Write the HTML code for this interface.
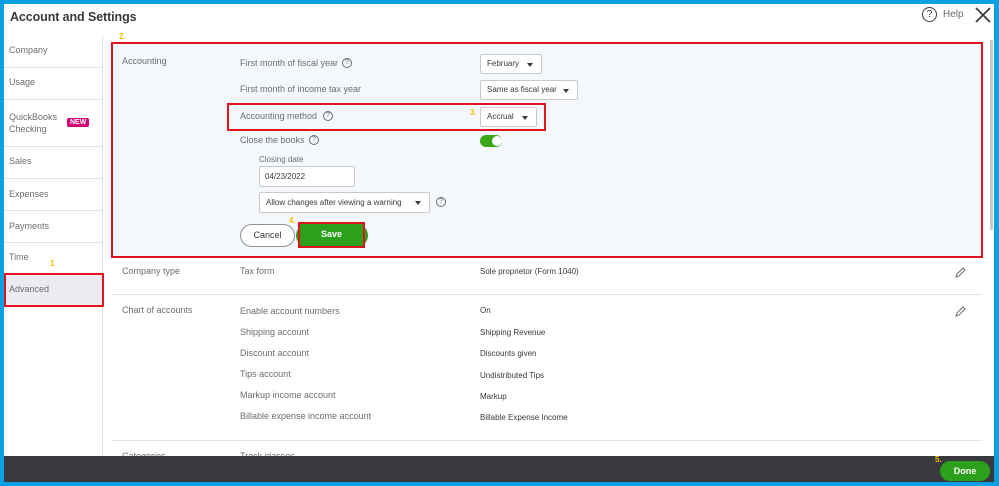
<!DOCTYPE html>
<html><head><meta charset="utf-8"><style>
*{margin:0;padding:0;box-sizing:border-box}
body{width:999px;height:486px;overflow:hidden;background:#0aa0e6;font-family:"Liberation Sans",sans-serif;position:relative}
.a{position:absolute;white-space:nowrap}
.win{position:absolute;left:4px;top:4px;width:990px;height:478px;background:#fff;overflow:hidden}
.t{font-size:9px;color:#6b6c72}
.v{font-size:8px;color:#393a3d}
.sl{position:absolute;left:4px;width:98px;height:1px;background:#e4e4e7}
.hl{position:absolute;left:111px;width:871px;height:1px;background:#e4e4e7}
.sel{position:absolute;background:#fff;border:1px solid #c9c9cc;border-radius:2px;font-size:8px;color:#393a3d;padding:0 0 0 6px;line-height:18px}
.sel:after{content:"";position:absolute;right:8px;top:8px;border-left:3px solid transparent;border-right:3px solid transparent;border-top:4px solid #393a3d}
.q{position:absolute;width:10px;height:10px;border:1px solid #6b6c72;border-radius:50%;font-size:7px;line-height:8px;text-align:center;color:#6b6c72}
.y{position:absolute;font-size:8px;color:#f5c000;font-weight:bold}
</style></head><body>
<div class="win"></div>
<div class="a" style="left:10px;top:10px;font-size:12.5px;font-weight:bold;color:#393a3d;letter-spacing:-0.1px">Account and Settings</div>
<div class="q" style="left:922px;top:7px;width:15px;height:15px;font-size:10px;line-height:13px;border-color:#393a3d;color:#393a3d">?</div>
<div class="a" style="left:943px;top:9px;font-size:10px;color:#6b6c72">Help</div>
<svg class="a" style="left:975px;top:7px" width="16" height="16"><path d="M1 1L15 15M15 1L1 15" stroke="#393a3d" stroke-width="1.8"/></svg>
<div class="a" style="left:990px;top:40px;width:3px;height:190px;background:#c9c9cc"></div>
<!-- sidebar -->
<div class="a" style="left:102px;top:36px;width:1px;height:420px;background:#e4e4e7"></div>
<div class="a t" style="left:9px;top:45px">Company</div><div class="sl" style="top:67px"></div>
<div class="a t" style="left:9px;top:77px">Usage</div><div class="sl" style="top:99px"></div>
<div class="a t" style="left:9px;top:111px;line-height:12px">QuickBooks<br>Checking</div>
<div class="a" style="left:67px;top:118px;background:#d4006f;color:#fff;font-size:7px;font-weight:bold;padding:1px 3px;border-radius:2px">NEW</div>
<div class="sl" style="top:146px"></div>
<div class="a t" style="left:9px;top:156px">Sales</div><div class="sl" style="top:178px"></div>
<div class="a t" style="left:9px;top:189px">Expenses</div><div class="sl" style="top:210px"></div>
<div class="a t" style="left:9px;top:221px">Payments</div><div class="sl" style="top:242px"></div>
<div class="a t" style="left:9px;top:252px">Time</div>
<div class="y" style="left:50px;top:259px">1</div>
<div class="a" style="left:4px;top:273px;width:100px;height:34px;background:#ececf0;border:2px solid #e0141e"></div>
<div class="a t" style="left:9px;top:284px">Advanced</div>
<!-- accounting box -->
<div class="y" style="left:119px;top:32px">2.</div>
<div class="a" style="left:111px;top:42px;width:872px;height:216px;background:#f4f8fd;border:2px solid #e0141e"></div>
<div class="a t" style="left:122px;top:56px">Accounting</div>
<div class="a t" style="left:240px;top:58px">First month of fiscal year</div><div class="q" style="left:342px;top:58px">?</div>
<div class="sel" style="left:480px;top:54px;width:62px;height:20px">February</div>
<div class="a t" style="left:240px;top:84px">First month of income tax year</div>
<div class="sel" style="left:480px;top:80px;width:98px;height:20px">Same as fiscal year</div>
<div class="a" style="left:227px;top:103px;width:319px;height:28px;border:2.5px solid #e0141e"></div>
<div class="a t" style="left:240px;top:111px">Accounting method</div><div class="q" style="left:323px;top:111px">?</div>
<div class="y" style="left:470px;top:108px">3.</div>
<div class="sel" style="left:480px;top:107px;width:57px;height:20px">Accrual</div>
<div class="a t" style="left:240px;top:135px">Close the books</div><div class="q" style="left:309px;top:135px">?</div>
<div class="a" style="left:480px;top:135px;width:22px;height:12px;border-radius:6px;background:#3aa618"></div>
<div class="a" style="left:492px;top:136px;width:10px;height:10px;border-radius:50%;background:#fff"></div>
<div class="a" style="left:259px;top:155px;font-size:8px;color:#6b6c72">Closing date</div>
<div class="a" style="left:259px;top:166px;width:96px;height:21px;background:#fff;border:1px solid #c9c9cc;border-radius:2px;font-size:8px;color:#393a3d;padding-left:5px;line-height:19px">04/23/2022</div>
<div class="sel" style="left:259px;top:192px;width:171px;height:21px;line-height:19px">Allow changes after viewing a warning</div>
<div class="q" style="left:436px;top:197px">?</div>
<div class="a" style="left:240px;top:224px;width:55px;height:23px;border:1px solid #8d9096;border-radius:12px;background:#fff;font-size:9px;color:#393a3d;text-align:center;line-height:21px">Cancel</div>
<div class="a" style="left:296px;top:224px;width:72px;height:23px;border-radius:12px;background:#2ca01c"></div>
<div class="y" style="left:289px;top:216px">4.</div>
<div class="a" style="left:298px;top:222px;width:67px;height:26px;border:2.5px solid #e0141e;background:#2ca01c;color:#fff;font-size:9px;font-weight:bold;text-align:center;line-height:21px">Save</div>
<!-- rows -->
<div class="a t" style="left:122px;top:266px">Company type</div>
<div class="a t" style="left:240px;top:266px">Tax form</div>
<div class="a v" style="left:480px;top:267px">Sole proprietor (Form 1040)</div>
<svg class="a" style="left:954px;top:267px" width="12" height="12"><path d="M2 10L3 7L9 1L11 3L5 9Z" fill="none" stroke="#6b6c72" stroke-width="1"/></svg>
<div class="hl" style="top:294px"></div>
<div class="a t" style="left:122px;top:305px">Chart of accounts</div>
<div class="a t" style="left:240px;top:306px">Enable account numbers</div><div class="a v" style="left:480px;top:306px">On</div>
<div class="a t" style="left:240px;top:327px">Shipping account</div><div class="a v" style="left:480px;top:328px">Shipping Revenue</div>
<div class="a t" style="left:240px;top:348px">Discount account</div><div class="a v" style="left:480px;top:349px">Discounts given</div>
<div class="a t" style="left:240px;top:369px">Tips account</div><div class="a v" style="left:480px;top:371px">Undistributed Tips</div>
<div class="a t" style="left:240px;top:390px">Markup income account</div><div class="a v" style="left:480px;top:392px">Markup</div>
<div class="a t" style="left:240px;top:411px">Billable expense income account</div><div class="a v" style="left:480px;top:413px">Billable Expense Income</div>
<svg class="a" style="left:954px;top:306px" width="12" height="12"><path d="M2 10L3 7L9 1L11 3L5 9Z" fill="none" stroke="#6b6c72" stroke-width="1"/></svg>
<div class="hl" style="top:440px"></div>
<div class="a t" style="left:122px;top:451px">Categories</div>
<div class="a t" style="left:240px;top:451px">Track classes</div>
<!-- footer -->
<div class="a" style="left:4px;top:456px;width:990px;height:26px;background:#393a3d"></div>
<div class="y" style="left:935px;top:455px">5.</div>
<div class="a" style="left:940px;top:461px;width:50px;height:20px;border-radius:10px;background:#2ca01c;color:#fff;font-size:9px;font-weight:bold;text-align:center;line-height:20px">Done</div>
</body></html>
